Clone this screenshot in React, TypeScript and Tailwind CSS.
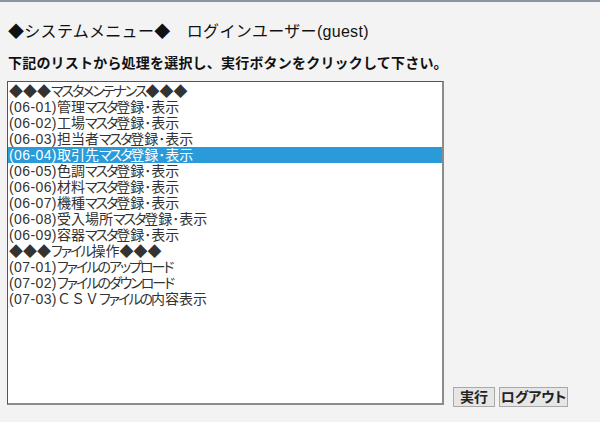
import React from "react";

const items = [
  "◆◆◆マスタメンテナンス◆◆◆",
  "(06-01)管理マスタ登録･表示",
  "(06-02)工場マスタ登録･表示",
  "(06-03)担当者マスタ登録･表示",
  "(06-04)取引先マスタ登録･表示",
  "(06-05)色調マスタ登録･表示",
  "(06-06)材料マスタ登録･表示",
  "(06-07)機種マスタ登録･表示",
  "(06-08)受入場所マスタ登録･表示",
  "(06-09)容器マスタ登録･表示",
  "◆◆◆ファイル操作◆◆◆",
  "(07-01)ファイルのアップロード",
  "(07-02)ファイルのダウンロード",
  "(07-03)ＣＳＶファイルの内容表示",
];

const font = { fontFamily: '"Liberation Sans", "Noto Sans CJK JP", sans-serif' };

function Runs({ text }: { text: string }) {
  const parts = text.split(/([\u3040-\u30ff]+|[\uFF21-\uFF5A]+|\([0-9-]+\))/).filter((p) => p !== "");
  return (
    <>
      {parts.map((p, i) => {
        if (/^[\u3040-\u30ff]+$/.test(p))
          return (
            <span key={i} className="tracking-[-2px] [font-feature-settings:'palt']">
              {p}
            </span>
          );
        if (/^[\uFF21-\uFF5A]+$/.test(p))
          return (
            <span key={i} className="[font-feature-settings:normal]">
              {p}
            </span>
          );
        if (/^\(/.test(p))
          return (
            <span key={i} className="tracking-[0.4px]">
              {p}
            </span>
          );
        return <span key={i}>{p}</span>;
      })}
    </>
  );
}

export default function App() {
  return (
    <div
      className="w-[600px] h-[422px] bg-[#f3f3f3] text-[#111] overflow-hidden"
      style={font}
    >
      <div className="h-[2px] bg-[#8a96a3]" />
      <div className="pl-[8px] pt-[20px]">
        <div className="text-[16px] leading-[20px] text-[#111] whitespace-pre tracking-[0.3px]">
          ◆システムメニュー◆　ログインユーザー(guest)
        </div>
        <div className="mt-[12px] text-[14px] leading-[18px] font-bold text-[#111] tracking-[0.2px]">
          下記のリストから処理を選択し、実行ボタンをクリックして下さい。
        </div>
        <div className="mt-[9px] flex items-end">
          <div className="ml-[-1px] w-[437px] h-[324px] bg-white border-t border-l border-[#555] border-r-2 border-b-2 border-r-[#8c8c8c] border-b-[#8c8c8c] pt-[1px] overflow-hidden">
            {items.map((t, i) => (
              <div
                key={i}
                className={
                  "text-[14px] leading-[16px] h-[16px] pl-[1px] whitespace-nowrap " +
                  (i === 4 ? "bg-[#2b9ad8] text-white" : "text-[#333]")
                }
              >
                <Runs text={t} />
              </div>
            ))}
          </div>
          <div className="flex gap-[4px] ml-[9px] mb-[-2px]">
            <button className="w-[42px] h-[20px] text-[14px] leading-[18px] font-bold text-[#222] bg-[#e6e6e6] border border-[#a9a9a9]">
              実行
            </button>
            <button className="w-[69px] h-[20px] text-[14px] leading-[18px] font-bold text-[#222] bg-[#e6e6e6] border border-[#a9a9a9] [font-feature-settings:'palt']">
              ログアウト
            </button>
          </div>
        </div>
      </div>
    </div>
  );
}
